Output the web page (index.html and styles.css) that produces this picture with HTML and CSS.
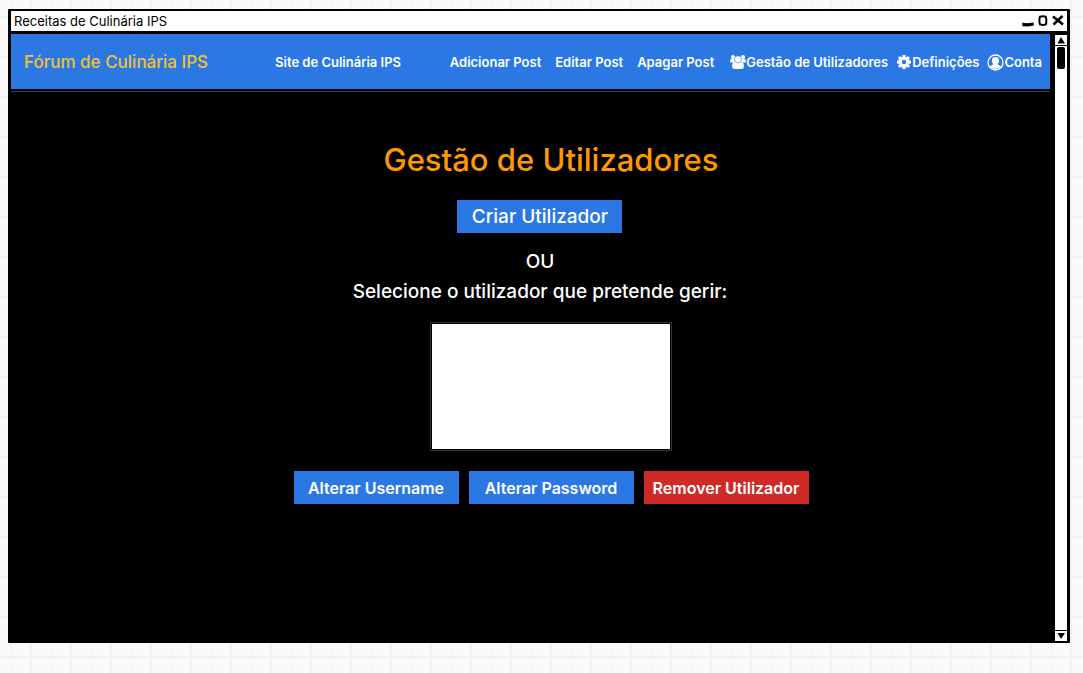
FILE: index.html
```html
<!DOCTYPE html>
<html lang="pt">
<head>
<meta charset="utf-8">
<meta name="viewport" content="width=device-width, initial-scale=1">
<title>Receitas de Culinária IPS</title>
<link rel="stylesheet" href="styles.css">
</head>
<body class="canvas">
<div class="window">
  <header class="titlebar">
    <span class="titlebar-text">Receitas de Culinária IPS</span>
    <div class="window-controls">
      <button class="window-button" type="button" aria-label="Minimizar"><svg width="12" height="12" viewBox="0 0 12 12"><path d="M.2 7.8 5 8.2 11.6 7.6 11.8 10.6 6 11.4.4 11.2Z" fill="#000"/></svg></button>
      <button class="window-button" type="button" aria-label="Maximizar"><svg width="12" height="12" viewBox="0 0 12 12"><path d="M3 1.6Q6 .7 8.7 1.6 9.8 5.5 9 9.4 6 10.4 3 9.4 1.8 6 3 1.6Z" fill="none" stroke="#000" stroke-width="2"/></svg></button>
      <button class="window-button" type="button" aria-label="Fechar"><svg width="12" height="12" viewBox="0 0 12 12"><path d="M1 1.5 11 9.5M10.5 1 1.5 9.5" fill="none" stroke="#000" stroke-width="2.6"/></svg></button>
    </div>
  </header>
  <div class="viewport">
    <div class="page">
      <nav class="navbar">
        <a class="brand" href="#">Fórum de Culinária IPS</a>
        <a class="nav-link" href="#">Site de Culinária IPS</a>
        <div class="nav-groups">
          <div class="post-links">
            <a class="nav-link" href="#">Adicionar Post</a>
            <a class="nav-link" href="#">Editar Post</a>
            <a class="nav-link" href="#">Apagar Post</a>
          </div>
          <div class="account-links">
            <a class="nav-link" href="#"><svg width="16" height="16" viewBox="0 0 16 16" fill="#fff"><circle cx="3" cy="3" r="2.1"/><circle cx="13" cy="3" r="2.1"/><path d="M.2 8.5V6.6Q.3 4.7 2 4.7H4.7V8.5ZM15.8 8.5V6.6Q15.7 4.7 14 4.7H11.3V8.5Z"/><path d="M2.2 13V11.5Q2.4 7.8 5.2 7.8 8 9.5 10.8 7.8 13.6 7.8 13.8 11.5V13Q13.6 15 12 15H4Q2.4 15 2.2 13Z"/><circle cx="8" cy="5.3" r="3.5" stroke="#2b78e4" stroke-width=".5"/></svg>Gestão de Utilizadores</a>
            <a class="nav-link" href="#"><svg width="16" height="16" viewBox="0 0 16 16"><circle cx="8" cy="8" r="3.9" fill="none" stroke="#fff" stroke-width="3.4"/><path d="M8 1V4M8 12V15M1 8H4M12 8H15M3 3 5 5M11 11 13 13M13 3 11 5M5 11 3 13" stroke="#fff" stroke-width="3"/></svg>Definições</a>
            <a class="nav-link" href="#"><svg width="17" height="17" viewBox="0 0 17 17"><circle cx="8.5" cy="8.5" r="7.5" fill="none" stroke="#fff" stroke-width="1.3"/><path d="M8.5 3C5.7 3 4.5 5 5 7.5 5.3 9 6.1 9.4 6.2 10.3 5.8 11.2 4 11.3 3 12.4 5.6 15.7 11.4 15.7 14 12.4 13 11.3 11.2 11.2 10.8 10.3 10.9 9.4 11.7 9 12 7.5 12.5 5 11.3 3 8.5 3Z" fill="#fff"/></svg>Conta</a>
          </div>
        </div>
      </nav>
      <main class="content">
        <h1 class="title">Gestão de Utilizadores</h1>
        <div class="intro">
          <button class="button button-large" type="button">Criar Utilizador</button>
          <p class="intro-text">OU</p>
          <label class="intro-text" for="users">Selecione o utilizador que pretende gerir:</label>
        </div>
        <select class="user-list" id="users" size="5"></select>
        <div class="actions">
          <button class="button" type="button">Alterar Username</button>
          <button class="button" type="button">Alterar Password</button>
          <button class="button button-danger" type="button">Remover Utilizador</button>
        </div>
      </main>
    </div>
    <div class="scrollbar">
      <button class="scroll-button" type="button" aria-label="Subir"><svg width="12" height="10" viewBox="0 0 12 10"><path d="M6 2 10 8.5H2.5Z"/></svg></button>
      <div class="scroll-track"><div class="scroll-thumb"></div></div>
      <button class="scroll-button" type="button" aria-label="Descer"><svg width="12" height="10" viewBox="0 0 12 10"><path d="M2.5 2H10L6 8Z"/></svg></button>
    </div>
  </div>
</div>
</body>
</html>
```

FILE: styles.css
```css
* { box-sizing: border-box; }

.canvas {
  margin: 0;
  min-height: 100vh;
  padding: 9px 13px 30px 8px;
  display: flex;
  font-family: Inter, Lato, sans-serif;
  background-color: #fafafa;
  background-image:
    linear-gradient(90deg, #f1f1f1 2px, transparent 2px),
    linear-gradient(#f1f1f1 2px, transparent 2px),
    linear-gradient(90deg, #f4f4f4 1px, transparent 1px),
    linear-gradient(#f4f4f4 1px, transparent 1px);
  background-size: 40px 40px;
  background-position: 30px 0, 0 16px, 11px 0, 0 37px;
}

.window {
  flex: 1;
  min-width: 0;
  display: flex;
  flex-direction: column;
  border: 3px solid #000;
  border-top-width: 2px;
  border-bottom-width: 1px;
  border-radius: 1px;
  background: #000;
}

.titlebar {
  height: 20px;
  padding: 0 3px;
  display: flex;
  align-items: center;
  justify-content: space-between;
  background: #fff;
}

.titlebar-text { font-size: 13px; line-height: 18px; font-weight: 400; color: #000; }
.window-controls { display: flex; gap: 3px; }

.window-button,
.scroll-button {
  display: block;
  padding: 0;
  border: 0;
  background: none;
}

.window-button svg,
.scroll-button svg { display: block; }

.viewport {
  flex: 1;
  margin-top: 3px;
  display: flex;
  gap: 5px;
}

.page {
  flex: 1;
  min-width: 0;
  display: flex;
  flex-direction: column;
}

.navbar {
  min-height: 55px;
  padding: 1px 8px 0 13px;
  display: flex;
  align-items: center;
  background: #2b78e4;
}

.brand {
  margin-right: 67px;
  font-size: 17px;
  line-height: 24px;
  font-weight: 500;
  color: #f1c232;
  text-decoration: none;
  white-space: nowrap;
}

.nav-link {
  display: flex;
  align-items: center;
  font-size: 13px;
  line-height: 20px;
  font-weight: 600;
  color: #fff;
  text-decoration: none;
  white-space: nowrap;
}

.nav-groups { margin-left: auto; display: flex; gap: 16px; }
.post-links { display: flex; gap: 14px; }
.account-links { display: flex; gap: 8px; }

.content {
  flex: 1;
  margin-top: 2px;
  padding: 48px 0 24px 41px;
  border-top: 1px solid #3a3a3a;
  display: flex;
  flex-direction: column;
  align-items: center;
  color: #fff;
}

.title {
  margin: 0;
  font-size: 31px;
  line-height: 40px;
  font-weight: 500;
  color: #ff9900;
}

.intro {
  margin-top: 20px;
  padding-right: 22px;
  display: flex;
  flex-direction: column;
  align-items: center;
}

.intro .button { margin-bottom: 14px; }

.intro-text {
  margin: 0;
  font-size: 19px;
  line-height: 30px;
  font-weight: 500;
}

.button {
  width: 165px;
  height: 33px;
  padding: 0;
  border: 0;
  font-family: inherit;
  font-size: 16px;
  line-height: 24px;
  font-weight: 600;
  color: #fff;
  background: #2b78e4;
  white-space: nowrap;
}

.button-large { font-size: 19px; font-weight: 500; }
.button-danger { background: #cf2a27; }

.user-list {
  width: 240px;
  height: 127px;
  margin-top: 16px;
  padding: 0;
  border: 1px solid #000;
  border-radius: 0;
  outline: 1px solid #333;
  font-family: inherit;
  font-size: 16px;
  color: #000;
  background: #fff;
}

.actions { margin-top: 21px; display: flex; gap: 10px; }

.scrollbar {
  width: 12px;
  display: flex;
  flex-direction: column;
  background: #fff;
}

.scroll-button { border-top: 1px solid #000; border-bottom: 1px solid #000; }
.scroll-track { flex: 1; padding: 1px 2px; }
.scroll-thumb { height: 22px; border-radius: 2px; background: #000; }
```
